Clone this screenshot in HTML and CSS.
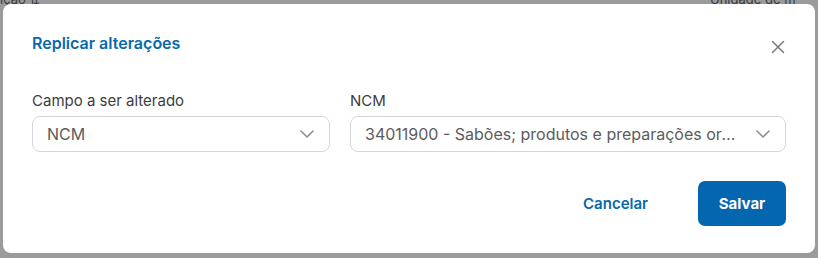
FILE: index.html
```html
<!DOCTYPE html>
<html lang="pt-BR">
<head>
<meta charset="utf-8">
<title>Replicar alterações</title>
<link rel="stylesheet" href="styles.css">
</head>
<body>
<div class="backdrop">
  <div class="bg-head">
    <span class="bg-col">ição ⇅</span>
    <span class="bg-col right">Unidade de m</span>
  </div>
</div>
<div class="modal" role="dialog">
  <div class="modal-head">
    <h2 class="modal-title">Replicar alterações</h2>
    <button class="close" aria-label="Fechar">
      <svg width="14" height="14" viewBox="0 0 14 14"><path d="M1.5 1.5 L12.5 12.5 M12.5 1.5 L1.5 12.5" stroke="#7a7a7a" stroke-width="1.5" fill="none" stroke-linecap="round"/></svg>
    </button>
  </div>
  <div class="fields">
    <div class="field">
      <label class="label">Campo a ser alterado</label>
      <div class="select">
        <span class="value">NCM</span>
        <svg class="chev" width="14" height="8" viewBox="0 0 14 8"><path d="M1 1 L7 7 L13 1" stroke="#8a8f99" stroke-width="1.6" fill="none" stroke-linecap="round" stroke-linejoin="round"/></svg>
      </div>
    </div>
    <div class="field">
      <label class="label">NCM</label>
      <div class="select">
        <span class="value">34011900 - Sabões; produtos e preparações orgânicos tensoativos</span>
        <svg class="chev" width="14" height="8" viewBox="0 0 14 8"><path d="M1 1 L7 7 L13 1" stroke="#8a8f99" stroke-width="1.6" fill="none" stroke-linecap="round" stroke-linejoin="round"/></svg>
      </div>
    </div>
  </div>
  <div class="actions">
    <button class="btn-link">Cancelar</button>
    <button class="btn-primary">Salvar</button>
  </div>
</div>
</body>
</html>
```
FILE: styles.css
```css
* { box-sizing: border-box; }
html, body { margin: 0; padding: 0; }
body {
  width: 818px;
  height: 258px;
  background: #9b9b9b;
  font-family: Inter, Roboto, "Liberation Sans", Arial, sans-serif;
  overflow: hidden;
  position: relative;
}
.backdrop {
  position: absolute;
  inset: 0;
  overflow: hidden;
}
.bg-head {
  display: flex;
  justify-content: space-between;
  margin-top: -9px;
  font-size: 13px;
  line-height: 16px;
  color: #3a3a3a;
}
.bg-col.right { width: 108px; white-space: nowrap; overflow: hidden; }

.modal {
  position: absolute;
  left: 3px;
  top: 4px;
  width: 812px;
  height: 249px;
  background: #fff;
  border-radius: 8px;
  padding: 29px 29px 27px 29px;
  display: flex;
  flex-direction: column;
}
.modal-head {
  display: flex;
  justify-content: space-between;
  align-items: flex-start;
  height: 20px;
}
.modal-title {
  margin: 0;
  font-size: 16px;
  line-height: 20px;
  font-weight: 600;
  color: #0a68ad;
}
.close {
  border: 0;
  background: none;
  padding: 0;
  margin: 7px 1px 0 0;
  width: 14px;
  height: 14px;
  cursor: pointer;
  display: flex;
}
.fields {
  display: grid;
  grid-template-columns: 298px minmax(0, 1fr);
  column-gap: 20px;
  margin-top: 38px;
}
.field { display: flex; flex-direction: column; min-width: 0; }
.label {
  font-size: 15px;
  line-height: 20px;
  color: #3d3d3d;
  margin-bottom: 5px;
}
.select {
  height: 36px;
  border: 1px solid #d3d6dd;
  border-radius: 8px;
  display: flex;
  align-items: center;
  padding: 0 15px 0 14px;
  gap: 14px;
  min-width: 0;
}
.value {
  flex: 1;
  min-width: 0;
  font-size: 16px;
  color: #5c5c5c;
  white-space: nowrap;
  overflow: hidden;
  text-overflow: ellipsis;
}
.chev { flex: none; }
.actions {
  margin-top: auto;
  display: flex;
  justify-content: flex-end;
  align-items: center;
  gap: 50px;
}
.btn-link {
  border: 0;
  background: none;
  font-family: inherit;
  font-size: 15px;
  font-weight: 600;
  color: #0a68ad;
  padding: 0;
  cursor: pointer;
}
.btn-primary {
  border: 0;
  background: #0566b0;
  color: #fff;
  font-family: inherit;
  font-size: 15px;
  font-weight: 700;
  width: 88px;
  height: 45px;
  border-radius: 7px;
  cursor: pointer;
}
```
